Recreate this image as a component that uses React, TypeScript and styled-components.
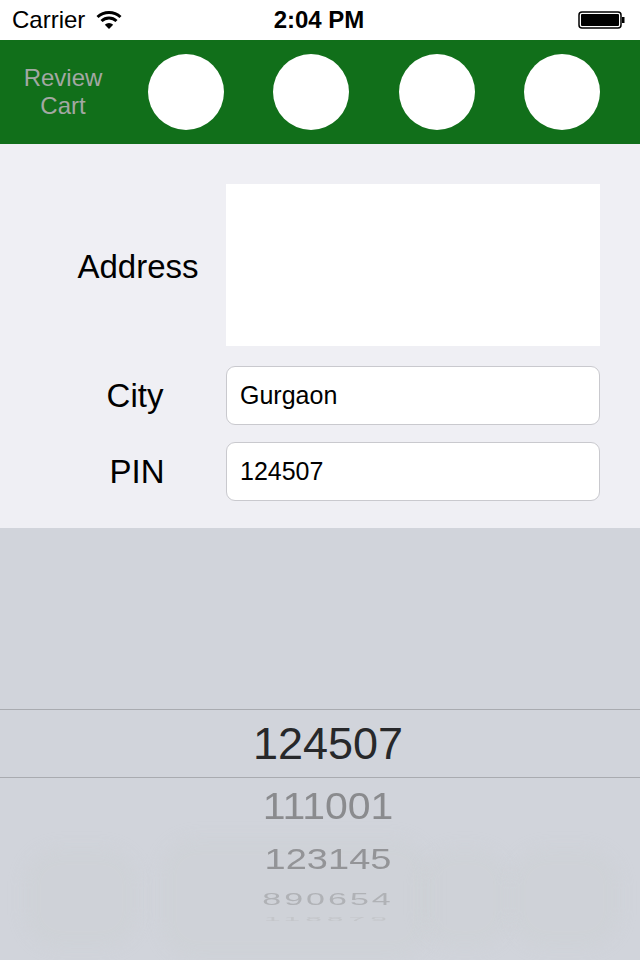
import styled, { createGlobalStyle } from "styled-components";

const GlobalStyle = createGlobalStyle`
  html, body {
    margin: 0;
    padding: 0;
    background: #ffffff;
  }
  body {
    font-family: "Liberation Sans", Arial, sans-serif;
  }
`;

const Screen = styled.div`
  width: 640px;
  height: 960px;
  display: flex;
  flex-direction: column;
  overflow: hidden;
`;

const StatusBar = styled.div`
  height: 40px;
  display: grid;
  grid-template-columns: 1fr auto 1fr;
  align-items: center;
  padding: 0 12px;
  box-sizing: border-box;
  background: #ffffff;
  color: #000;
  font-size: 24px;
`;

const StatusLeft = styled.div`
  display: flex;
  align-items: center;
  gap: 11px;
`;

const Clock = styled.div`
  font-weight: bold;
  font-size: 24px;
  padding-right: 2px;
`;

const StatusRight = styled.div`
  display: flex;
  justify-content: flex-end;
  padding-right: 2px;
`;

const Header = styled.div`
  height: 104px;
  background: #116f1a;
  display: flex;
  align-items: center;
  padding: 0 40px 0 20px;
  box-sizing: border-box;
`;

const ReviewCart = styled.div`
  width: 86px;
  text-align: center;
  color: #a3a8a3;
  font-size: 24px;
  line-height: 28px;
  margin-right: 42px;
`;

const Circles = styled.div`
  flex: 1;
  display: flex;
  justify-content: space-between;
`;

const Circle = styled.div`
  width: 76px;
  height: 76px;
  border-radius: 50%;
  background: #ffffff;
`;

const Form = styled.div`
  height: 384px;
  background: #efeff4;
  padding: 40px 40px 0 40px;
  box-sizing: border-box;
  display: grid;
  grid-template-columns: 186px 374px;
  align-content: start;
  row-gap: 17px;
`;

const Label = styled.div<{ $shift: number }>`
  align-self: center;
  text-align: center;
  font-size: 33px;
  color: #000;
  padding-left: ${(p) => p.$shift}px;
`;

const AddressBox = styled.div`
  height: 162px;
  background: #fff;
  margin-bottom: 3px;
`;

const Field = styled.div`
  height: 59px;
  box-sizing: border-box;
  background: #fff;
  border: 1px solid #c9c9ce;
  border-radius: 9px;
  display: flex;
  align-items: center;
  padding-left: 13px;
  font-size: 25px;
  color: #000;
`;

const Picker = styled.div`
  flex: 1;
  background: #d1d4db;
  position: relative;
  display: flex;
  flex-direction: column;
  align-items: center;
`;

const Spacer = styled.div`
  height: 181px;
`;

const Selected = styled.div`
  width: 100%;
  height: 69px;
  border-top: 1px solid #a9abb0;
  border-bottom: 1px solid #a9abb0;
  box-sizing: border-box;
  display: flex;
  align-items: center;
  justify-content: center;
  font-size: 45px;
  color: #27282a;
  padding-left: 16px;
  position: relative;
`;

const Row = styled.div<{
  $size: number;
  $scale: number;
  $color: string;
  $h: number;
  $spacing?: number;
}>`
  height: ${(p) => p.$h}px;
  display: flex;
  align-items: center;
  justify-content: center;
  font-size: ${(p) => p.$size}px;
  letter-spacing: ${(p) => p.$spacing ?? 0}px;
  color: ${(p) => p.$color};
  transform: scaleY(${(p) => p.$scale});
  padding-left: 16px;
  line-height: 1;
  position: relative;
`;

const Ghost = styled.div<{ $l: number; $t: number; $w: number; $h: number }>`
  position: absolute;
  left: ${(p) => p.$l}px;
  top: ${(p) => p.$t}px;
  width: ${(p) => p.$w}px;
  height: ${(p) => p.$h}px;
  border-radius: 36px;
  background: rgba(200, 203, 207, 0.22);
  filter: blur(8px);
`;

const Wifi = () => (
  <svg width="26" height="20" viewBox="0 0 26 20">
    <path d="M1.5 7 A17 17 0 0 1 24.5 7" stroke="#000" strokeWidth="3" fill="none" />
    <path d="M5.5 11 A11 11 0 0 1 20.5 11" stroke="#000" strokeWidth="3" fill="none" />
    <path d="M13 19 L8.8 14.8 A6 6 0 0 1 17.2 14.8 Z" fill="#000" />
  </svg>
);

const Battery = () => (
  <svg width="48" height="20" viewBox="0 0 48 20">
    <rect x="1" y="2" width="42" height="16" rx="3" fill="none" stroke="#000" strokeWidth="1.5" />
    <rect x="3" y="4" width="38" height="12" rx="1" fill="#000" />
    <rect x="44" y="7" width="2.5" height="6" fill="#000" />
  </svg>
);

export default function App() {
  return (
    <Screen>
      <GlobalStyle />
      <StatusBar>
        <StatusLeft>
          <span>Carrier</span>
          <Wifi />
        </StatusLeft>
        <Clock>2:04 PM</Clock>
        <StatusRight>
          <Battery />
        </StatusRight>
      </StatusBar>
      <Header>
        <ReviewCart>
          Review
          <br />
          Cart
        </ReviewCart>
        <Circles>
          <Circle />
          <Circle />
          <Circle />
          <Circle />
        </Circles>
      </Header>
      <Form>
        <Label $shift={10}>Address</Label>
        <AddressBox />
        <Label $shift={4}>City</Label>
        <Field>Gurgaon</Field>
        <Label $shift={8}>PIN</Label>
        <Field>124507</Field>
      </Form>
      <Picker>
        <Ghost $l={24} $t={320} $w={115} $h={100} />
        <Ghost $l={160} $t={310} $w={270} $h={120} />
        <Ghost $l={420} $t={320} $w={90} $h={100} />
        <Ghost $l={510} $t={320} $w={110} $h={100} />
        <Spacer />
        <Selected>124507</Selected>
        <Row $size={41} $scale={0.92} $color="#8a8b8e" $h={56}>111001</Row>
        <Row $size={38} $scale={0.78} $color="#939497" $h={50}>123145</Row>
        <Row $size={34} $scale={0.5} $color="#b0b2b6" $h={30} $spacing={3}>890654</Row>
        <Row $size={30} $scale={0.2} $color="#c4c6ca" $h={10} $spacing={5}>118879</Row>
      </Picker>
    </Screen>
  );
}
